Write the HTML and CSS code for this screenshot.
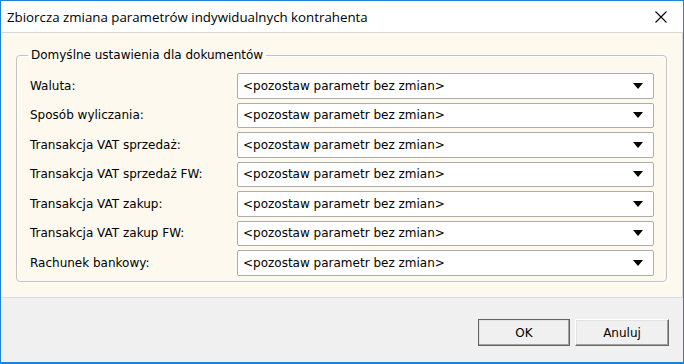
FILE: index.html
```html
<!DOCTYPE html>
<html>
<head>
<meta charset="utf-8">
<link rel="stylesheet" href="styles.css">
</head>
<body>
<div class="window">
  <div class="titlebar">
    <span class="title">Zbiorcza zmiana parametrów indywidualnych kontrahenta</span>
    <svg class="close" width="12" height="12" viewBox="0 0 12 12"><path d="M0.5 0.5 L11.5 11.5 M11.5 0.5 L0.5 11.5" stroke="#000" stroke-width="1.1" fill="none"/></svg>
  </div>
  <div class="content">
    <fieldset class="group">
      <legend>Domyślne ustawienia dla dokumentów</legend>
      <div class="rows">
        <div class="row"><span class="label">Waluta:</span><div class="combo"><span>&lt;pozostaw parametr bez zmian&gt;</span><i class="arrow"></i></div></div>
        <div class="row"><span class="label">Sposób wyliczania:</span><div class="combo"><span>&lt;pozostaw parametr bez zmian&gt;</span><i class="arrow"></i></div></div>
        <div class="row"><span class="label">Transakcja VAT sprzedaż:</span><div class="combo"><span>&lt;pozostaw parametr bez zmian&gt;</span><i class="arrow"></i></div></div>
        <div class="row"><span class="label">Transakcja VAT sprzedaż FW:</span><div class="combo"><span>&lt;pozostaw parametr bez zmian&gt;</span><i class="arrow"></i></div></div>
        <div class="row"><span class="label">Transakcja VAT zakup:</span><div class="combo"><span>&lt;pozostaw parametr bez zmian&gt;</span><i class="arrow"></i></div></div>
        <div class="row"><span class="label">Transakcja VAT zakup FW:</span><div class="combo"><span>&lt;pozostaw parametr bez zmian&gt;</span><i class="arrow"></i></div></div>
        <div class="row"><span class="label">Rachunek bankowy:</span><div class="combo"><span>&lt;pozostaw parametr bez zmian&gt;</span><i class="arrow"></i></div></div>
      </div>
    </fieldset>
  </div>
  <div class="footer">
    <button class="btn btn-default">OK</button>
    <button class="btn">Anuluj</button>
  </div>
</div>
</body>
</html>
```
FILE: styles.css
```css
* { box-sizing: border-box; }
html, body { margin: 0; padding: 0; }
body { width: 684px; height: 364px; overflow: hidden; background: #fff; }
.window {
  width: 684px; height: 364px;
  border: 1px solid #1c83d6;
  border-bottom-width: 2px;
  display: flex; flex-direction: column;
  background: #fff;
}
.titlebar {
  height: 31px; flex: none;
  display: flex; align-items: center; justify-content: space-between;
  padding: 0 16px 0 6px;
  background: #fff;
}
.title { font-family: "Open Sans", sans-serif; font-size: 13.3px; color: #000; }
.close { display: block; }
.content {
  flex: none; height: 265px;
  background: #fdf9ef;
  border-top: 1px solid #d8d8d8;
  border-left: 1px solid #f4f4f4;
  border-right: 1px solid #d8d8d8;
  padding: 15px 15px 0 14px;
}
.group {
  margin: 0; padding: 11px 12px 0 13px;
  height: 234px;
  border: 1px solid #c3c3c3;
  border-radius: 4px;
  box-shadow: inset 1px 1px 0 #fff, 1px 1px 0 #fff;
}
.group legend {
  font-family: "DejaVu Sans", sans-serif; font-size: 12px; color: #000;
  padding: 0 3px; margin-left: -2px;
}
.rows { display: flex; flex-direction: column; gap: 4px; }
.row { display: flex; align-items: center; height: 25.5px; }
.label { width: 207px; font-family: "DejaVu Sans", sans-serif; font-size: 12px; color: #000; }
.combo {
  flex: 1; height: 100%;
  display: flex; align-items: center; justify-content: space-between;
  background: #fff;
  border: 1px solid #acacac;
  border-radius: 2px;
  padding: 0 10px 0 5px;
  font-family: "DejaVu Sans", sans-serif; font-size: 12px; color: #000;
}
.arrow { width: 0; height: 0; border-left: 5px solid transparent; border-right: 5px solid transparent; border-top: 6px solid #000; }
.footer {
  flex: 1;
  background: #f0f0f0;
  border-top: 1px solid #dcdcdc;
  display: flex; justify-content: flex-end; align-items: flex-start;
  gap: 5px;
  padding: 21px 14px 0 0;
}
.btn {
  width: 94px; height: 27px;
  font-family: "DejaVu Sans", sans-serif; font-size: 12px; color: #000;
  background: #f0f0f0;
  border: 1px solid;
  border-color: #fff #696969 #696969 #fff;
  box-shadow: inset -1px -1px 0 #a0a0a0, inset 1px 1px 0 #e3e3e3;
  padding: 0;
}
.btn-default { outline: 1px solid #646464; outline-offset: -1px; width: 92px; }
```
